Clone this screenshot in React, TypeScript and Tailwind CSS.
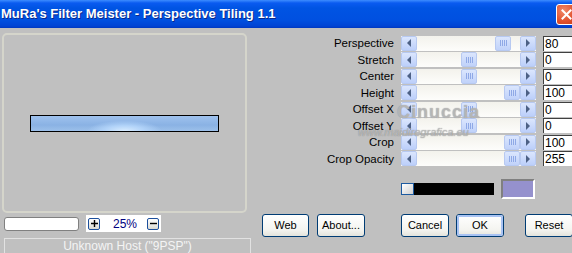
import React from "react";

const sliders = [
  { label: "Perspective", value: "80", pos: 0.9 },
  { label: "Stretch", value: "0", pos: 0.5 },
  { label: "Center", value: "0", pos: 0.5 },
  { label: "Height", value: "100", pos: 1 },
  { label: "Offset X", value: "0", pos: 0.5 },
  { label: "Offset Y", value: "0", pos: 0.5 },
  { label: "Crop", value: "100", pos: 1 },
  { label: "Crop Opacity", value: "255", pos: 1 },
];

function Arrow({ dir }: { dir: "left" | "right" }) {
  return (
    <svg width="6" height="8" viewBox="0 0 6 8">
      {dir === "left" ? (
        <polygon points="5,0 5,8 1,4" fill="#4d6185" />
      ) : (
        <polygon points="1,0 1,8 5,4" fill="#4d6185" />
      )}
    </svg>
  );
}

function ScrollBtn({ dir }: { dir: "left" | "right" }) {
  return (
    <div className="w-[16px] h-[15px] shrink-0 rounded-[2px] border border-[#b7c9f1] bg-[linear-gradient(180deg,#dbe6fd,#bccffa)] flex items-center justify-center">
      <Arrow dir={dir} />
    </div>
  );
}

function Slider({ pos }: { pos: number }) {
  // track is 103px, thumb 16px
  const left = Math.round(pos * 87);
  return (
    <div className="flex w-[135px] h-[15px] bg-[linear-gradient(180deg,#f3f2ec,#fdfdfb)]">
      <ScrollBtn dir="left" />
      <div className="relative flex-1">
        <div
          className="absolute top-0 w-[16px] h-[15px] rounded-[2px] border border-[#b7c9f1] bg-[linear-gradient(180deg,#dbe6fd,#c0d2fa)] flex items-center justify-center gap-[1px]"
          style={{ left }}
        >
          <div className="w-[1px] h-[6px] bg-[#8fa9e6]" />
          <div className="w-[1px] h-[6px] bg-[#8fa9e6]" />
          <div className="w-[1px] h-[6px] bg-[#8fa9e6]" />
          <div className="w-[1px] h-[6px] bg-[#8fa9e6]" />
        </div>
      </div>
      <ScrollBtn dir="right" />
    </div>
  );
}

function XpButton({ label, w, focus }: { label: string; w: string; focus?: boolean }) {
  return (
    <div
      className={`${w} h-[23px] shrink-0 rounded-[3px] border border-[#003c74] bg-[linear-gradient(180deg,#ffffff,#f4f4f0_70%,#e4e4dc)] flex items-center justify-center text-[11px] text-black`}
    >
      {focus ? (
        <div className="w-full h-full rounded-[2px] border-2 border-[#a9c3f3] flex items-center justify-center">{label}</div>
      ) : (
        label
      )}
    </div>
  );
}

export default function App() {
  return (
    <div className="relative w-[572px] h-[253px] overflow-hidden bg-[#c0c0c0] font-['Liberation_Sans',Arial,sans-serif] text-[11px] text-black">
      {/* Title bar */}
      <div className="h-[28px] flex items-center overflow-hidden bg-[linear-gradient(180deg,#3d8dff_0px,#0a5bf0_3px,#0054e3_8px,#0050e0_20px,#0044d4_26px,#0038c0_28px)]">
        <span className="pl-[1px] text-white font-bold text-[13px] [text-shadow:1px_1px_0_#0b2a8a] whitespace-nowrap">
          MuRa's Filter Meister - Perspective Tiling 1.1
        </span>
        <div className="ml-auto mr-[-5px] w-[21px] h-[21px] mt-[1px] rounded-[3px] border border-white bg-[radial-gradient(circle_at_35%_30%,#f08a6a,#e0502c_60%,#c63c1a)] flex items-center justify-center">
          <svg width="11" height="11" viewBox="0 0 11 11">
            <path d="M1.5 1.5 L9.5 9.5 M9.5 1.5 L1.5 9.5" stroke="white" strokeWidth="2" strokeLinecap="square" />
          </svg>
        </div>
      </div>

      <div className="flex">
        {/* Left column */}
        <div className="w-[258px] shrink-0 pl-[2px] pt-[5px]">
          <div className="w-[245px] h-[180px] rounded-[5px] border-2 border-[#d5d5cb] flex items-center justify-center">
            <div className="w-[189px] h-[17px] border border-black bg-[radial-gradient(ellipse_50px_14px_at_50%_100%,#d8ecff_0%,#b0d2f8_40%,transparent_75%),linear-gradient(180deg,#9fc2ee,#8ab2e4_60%,#9cc0ea)]" />
          </div>

          <div className="mt-[2px] flex items-center">
            <div className="ml-[2px] w-[75px] h-[14px] bg-white border border-[#808080] rounded-[3px]" />
            <div className="ml-[7px] w-[75px] h-[17px] bg-white flex items-center">
              <div className="ml-[2px] w-[12px] h-[12px] rounded-[2px] border border-[#1c4f9c] bg-[linear-gradient(180deg,#ffffff,#dcdcd4)] flex items-center justify-center">
                <svg width="7" height="7" viewBox="0 0 7 7">
                  <path d="M0 3.5 H7 M3.5 0 V7" stroke="#000" strokeWidth="1.4" />
                </svg>
              </div>
              <span className="ml-[13px] text-[12px] text-[#000080]">25%</span>
              <div className="ml-auto mr-[2px] w-[12px] h-[12px] rounded-[2px] border border-[#1c4f9c] bg-[linear-gradient(180deg,#ffffff,#dcdcd4)] flex items-center justify-center">
                <svg width="7" height="7" viewBox="0 0 7 7">
                  <path d="M0 3.5 H7" stroke="#000" strokeWidth="1.4" />
                </svg>
              </div>
            </div>
          </div>

          <div className="mt-[6px] ml-[2px] w-[247px] h-[20px] border-t border-x border-[#e2e2e2] text-center text-[12px] leading-[15px] text-[#f4f4f4]">
            Unknown Host ("9PSP")
          </div>
        </div>

        {/* Right column */}
        <div className="flex-1 pt-[7px]">
          {sliders.map((s) => (
            <div key={s.label} className="flex items-center h-[16.5px]">
              <div className="w-[136px] text-right text-[11.5px] leading-[14px] whitespace-nowrap">{s.label}</div>
              <div className="ml-[7px]">
                <Slider pos={s.pos} />
              </div>
              <div className="ml-[7px] w-[40px] h-[15px] bg-white border-l border-t border-[#404040] text-[12px] leading-[14px] pl-[1px]">
                {s.value}
              </div>
            </div>
          ))}

          <div className="mt-[12px] pl-[143px] flex items-center h-[20px]">
            <div className="w-[13px] h-[12px] border border-[#1c5aa0] bg-[linear-gradient(135deg,#ffffff,#d0d0d0)]" />
            <div className="w-[80px] h-[12px] bg-black" />
            <div className="ml-[7px] w-[34px] h-[20px] border-2 border-t-[#808080] border-l-[#808080] border-b-white border-r-white bg-[#9591cd]" />
          </div>

          <div className="mt-[15px] flex">
            <div className="ml-[4px]"><XpButton label="Web" w="w-[47px]" /></div>
            <div className="ml-[8px]"><XpButton label="About..." w="w-[48px]" /></div>
            <div className="ml-[36px]"><XpButton label="Cancel" w="w-[48px]" /></div>
            <div className="ml-[7px]"><XpButton label="OK" w="w-[48px]" focus /></div>
            <div className="ml-[21px]"><XpButton label="Reset" w="w-[48px]" /></div>
          </div>
        </div>
      </div>

      {/* watermark */}
      <div className="absolute left-[397px] top-[99px] text-[18px] font-bold tracking-[1px] text-[#cfcfcf]/60 [text-shadow:0_0_1px_#8a8a8a] pointer-events-none">
        Cinuccia
      </div>
      <div className="absolute left-[358px] top-[124px] text-[11px] italic text-[#d4d4d4]/60 [text-shadow:0_0_1px_#7a7a7a] pointer-events-none">
        www.maidiregrafica.eu
      </div>
    </div>
  );
}
